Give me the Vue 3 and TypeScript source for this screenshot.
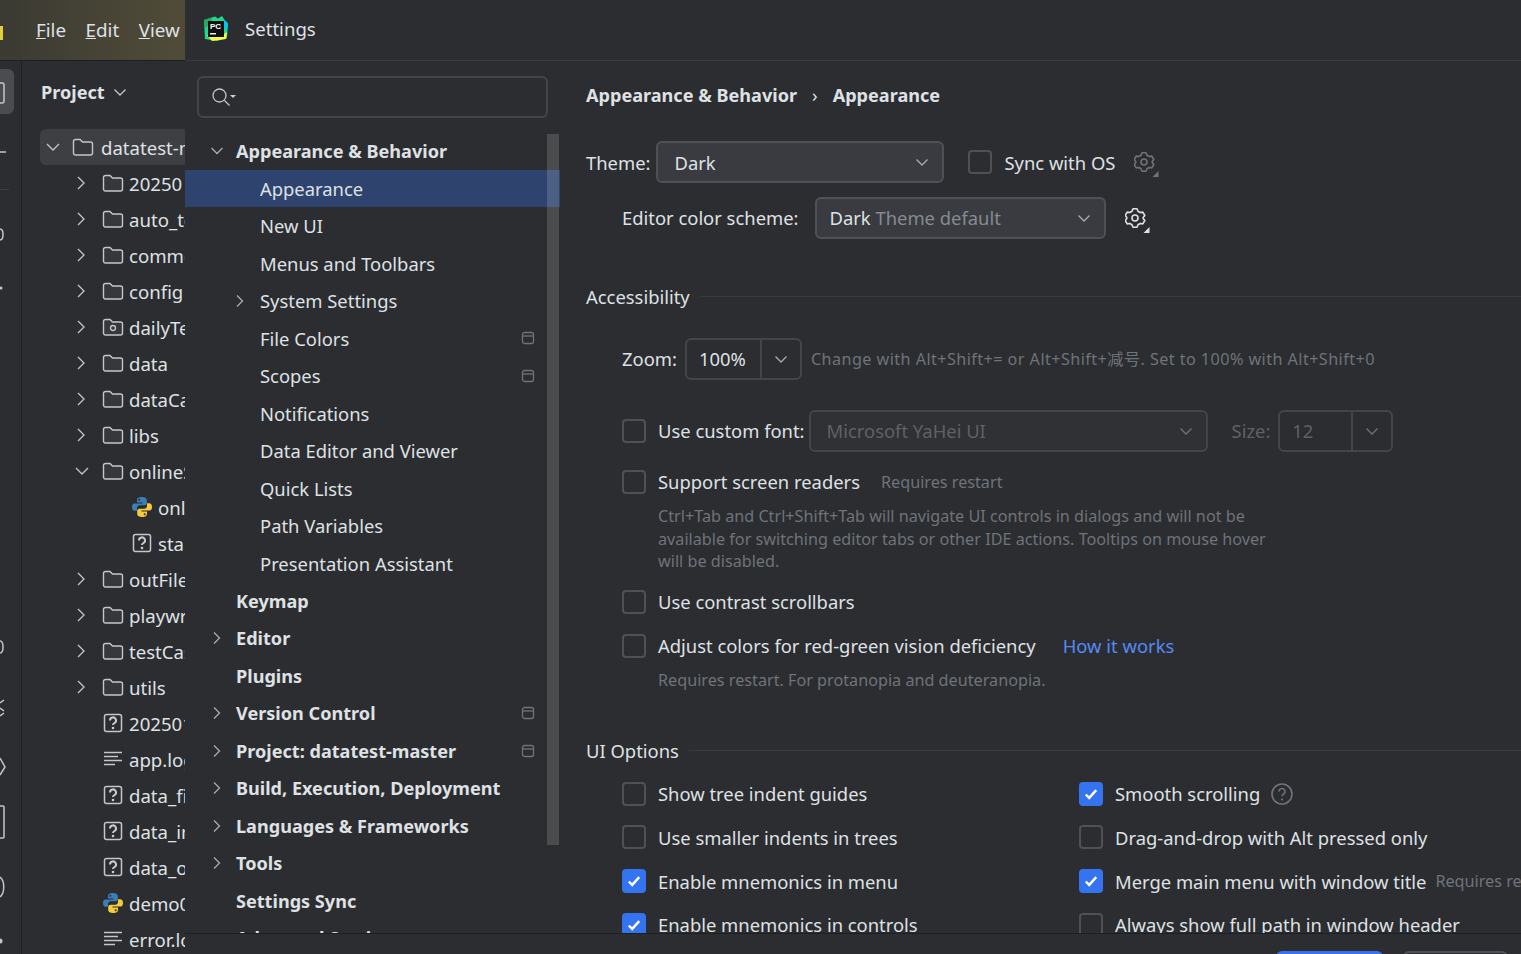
<script setup lang="ts">
interface TreeRow { label: string; indent: number; arrow?: 'r' | 'd'; icon: 'folder' | 'pkg' | 'py' | 'q' | 'log' }
interface NavRow { label: string; indent: number; arrow?: 'r' | 'd'; bold?: boolean; sel?: boolean; box?: boolean }

const tree: TreeRow[] = [
  { label: '20250', indent: 1, arrow: 'r', icon: 'folder' },
  { label: 'auto_test', indent: 1, arrow: 'r', icon: 'folder' },
  { label: 'common', indent: 1, arrow: 'r', icon: 'folder' },
  { label: 'config', indent: 1, arrow: 'r', icon: 'folder' },
  { label: 'dailyTest', indent: 1, arrow: 'r', icon: 'pkg' },
  { label: 'data', indent: 1, arrow: 'r', icon: 'folder' },
  { label: 'dataCase', indent: 1, arrow: 'r', icon: 'folder' },
  { label: 'libs', indent: 1, arrow: 'r', icon: 'folder' },
  { label: 'onlineScript', indent: 1, arrow: 'd', icon: 'folder' },
  { label: 'online', indent: 2, icon: 'py' },
  { label: 'start', indent: 2, icon: 'q' },
  { label: 'outFile', indent: 1, arrow: 'r', icon: 'folder' },
  { label: 'playwright', indent: 1, arrow: 'r', icon: 'folder' },
  { label: 'testCase', indent: 1, arrow: 'r', icon: 'folder' },
  { label: 'utils', indent: 1, arrow: 'r', icon: 'folder' },
  { label: '20250101', indent: 1, icon: 'q' },
  { label: 'app.log', indent: 1, icon: 'log' },
  { label: 'data_file', indent: 1, icon: 'q' },
  { label: 'data_info', indent: 1, icon: 'q' },
  { label: 'data_out', indent: 1, icon: 'q' },
  { label: 'demo01', indent: 1, icon: 'py' },
  { label: 'error.log', indent: 1, icon: 'log' },
]

const nav: NavRow[] = [
  { label: 'Appearance & Behavior', indent: 0, arrow: 'd', bold: true },
  { label: 'Appearance', indent: 1, sel: true },
  { label: 'New UI', indent: 1 },
  { label: 'Menus and Toolbars', indent: 1 },
  { label: 'System Settings', indent: 1, arrow: 'r' },
  { label: 'File Colors', indent: 1, box: true },
  { label: 'Scopes', indent: 1, box: true },
  { label: 'Notifications', indent: 1 },
  { label: 'Data Editor and Viewer', indent: 1 },
  { label: 'Quick Lists', indent: 1 },
  { label: 'Path Variables', indent: 1 },
  { label: 'Presentation Assistant', indent: 1 },
  { label: 'Keymap', indent: 0, bold: true },
  { label: 'Editor', indent: 0, arrow: 'r', bold: true },
  { label: 'Plugins', indent: 0, bold: true },
  { label: 'Version Control', indent: 0, arrow: 'r', bold: true, box: true },
  { label: 'Project: datatest-master', indent: 0, arrow: 'r', bold: true, box: true },
  { label: 'Build, Execution, Deployment', indent: 0, arrow: 'r', bold: true },
  { label: 'Languages & Frameworks', indent: 0, arrow: 'r', bold: true },
  { label: 'Tools', indent: 0, arrow: 'r', bold: true },
  { label: 'Settings Sync', indent: 0, bold: true },
  { label: 'Advanced Settings', indent: 0, bold: true },
]

const uiLeft = [
  { label: 'Show tree indent guides', on: false },
  { label: 'Use smaller indents in trees', on: false },
  { label: 'Enable mnemonics in menu', on: true },
  { label: 'Enable mnemonics in controls', on: true },
]

const gearPath = 'M8 .8h4L13 3.200 15.200 4.500 17.800 4.100 19.800 7.500 18.200 9.400V10.600L19.800 12.500 17.800 15.900 15.200 15.500 13 16.800 12 19.200H8L7 16.800 4.800 15.500 2.200 15.900 .2 12.500 1.800 10.600V9.400L.2 7.500 2.200 4.100 4.800 4.500 7 3.200z'
const folderPath = 'M1.500 4.500a2 2 0 0 1 2-2h4.500l2.500 2.500h8a2 2 0 0 1 2 2v9a2 2 0 0 1-2 2h-15a2 2 0 0 1-2-2z'
</script>

<template>
  <div class="stage">
    <!-- IDE behind -->
    <div class="ide">
      <div class="ide-bar">
        <span class="logo-peek"></span>
        <span class="menu"><u>F</u>ile</span>
        <span class="menu"><u>E</u>dit</span>
        <span class="menu"><u>V</u>iew</span>
      </div>
      <div class="ide-body">
        <div class="rail">
          <div class="rail-active"></div>
          <svg class="rail-art" width="21" height="893" viewBox="0 61 21 893">
            <path class="rail-ln" d="M-3 83H2a2 2 0 0 1 2 2V101a2 2 0 0 1-2 2H-3" />
            <path class="rail-ln" d="M0 152H6" />
            <path class="rail-div" d="M0 189.500H9" />
            <path class="rail-ln" d="M0 229C4 229 4 240 0 240" />
            <circle cx="1" cy="288" r="1.500" fill="#c3c6cc" />
            <path class="rail-ln" d="M0 641C4 641 4 653 0 653" />
            <path class="rail-ln" d="M0 703L4 700M0 708L4 711M0 716L4 713" />
            <path class="rail-ln" d="M0 758L5 767L0 775" />
            <path class="rail-ln" d="M0 806H3a1 1 0 0 1 1 1V837a1 1 0 0 1-1 1H0" />
            <path class="rail-ln" d="M0 877C5 881 5 893 0 897" />
            <circle cx="0" cy="941" r="2.500" fill="#c3c6cc" />
          </svg>
        </div>
        <div class="project">
          <div class="project-head">
            <span>Project</span>
            <svg width="14" height="14" viewBox="0 0 14 14"><path d="M1.500 4.500l5.500 5.500 5.500-5.500" class="ln" /></svg>
          </div>
          <div class="root-row">
            <svg class="tw" width="16" height="16" viewBox="0 0 16 16"><path d="M2 5l6 6 6-6" class="ln" /></svg>
            <svg class="fo" width="22" height="20" viewBox="0 0 22 20"><path :d="folderPath" class="fold" /></svg>
            <span class="tree-text">datatest-master</span>
          </div>
          <div v-for="r in tree" :key="r.label" class="tree-row" :class="'lv' + r.indent">
            <svg v-if="r.arrow === 'r'" class="tw" width="12" height="16" viewBox="0 0 12 16"><path d="M3 2l6 6-6 6" class="ln" /></svg>
            <svg v-else-if="r.arrow === 'd'" class="tw twd" width="14" height="16" viewBox="0 0 14 16"><path d="M1 5l6 6 6-6" class="ln" /></svg>
            <span v-else class="tw-space"></span>
            <svg v-if="r.icon === 'folder' || r.icon === 'pkg'" width="22" height="20" viewBox="0 0 22 20">
              <path :d="folderPath" class="fold" />
              <circle v-if="r.icon === 'pkg'" cx="11" cy="11" r="2.500" class="ln" />
            </svg>
            <svg v-else-if="r.icon === 'py'" width="22" height="22" viewBox="0 0 22 22">
              <path d="M11 1c-4 0-5 1.500-5 3v2.500h5.500v1H3.500C1.500 7.500 1 9.500 1 11s.6 3.800 2.500 3.800H6V12c0-1.500 1.200-2.700 2.700-2.700h4.800c1.300 0 2.300-1 2.300-2.300V4c0-1.800-2-3-4.800-3z" fill="#3b7fb8" />
              <path d="M11 21c4 0 5-1.500 5-3v-2.500h-5.500v-1h8c2 0 2.500-2 2.500-3.500s-.6-3.800-2.500-3.800H16V10c0 1.500-1.200 2.700-2.700 2.700H8.500c-1.300 0-2.300 1-2.300 2.300v3c0 1.800 2 3 4.800 3z" fill="#f5cb3c" />
              <circle cx="8.300" cy="3.800" r="1" fill="#2b2d30" />
              <circle cx="13.700" cy="18.200" r="1" fill="#2b2d30" />
            </svg>
            <svg v-else-if="r.icon === 'q'" width="22" height="20" viewBox="0 0 22 20">
              <rect x="2.500" y="1.500" width="17" height="17" rx="2" class="qbox" />
              <path d="M8 7.500a3 3 0 1 1 4.500 2.500c-1 .6-1.500 1-1.500 2" class="ln-b" />
              <circle cx="11" cy="15" r="1.300" fill="#c9ccd1" />
            </svg>
            <svg v-else width="22" height="20" viewBox="0 0 22 20">
              <path d="M2 3.500h18M2 7.500h14M2 11.500h18M2 15.500h11" class="ln" />
            </svg>
            <span class="tree-text">{{ r.label }}</span>
          </div>
        </div>
      </div>
    </div>

    <!-- Settings dialog -->
    <div class="dialog">
      <div class="title">
        <svg width="28" height="28" viewBox="0 0 28 28">
          <path d="M2 5L13 1.500L16 3.500L20 1L23 5.500L26 9L25 23L15 26L3 24z" fill="#21d789" />
          <path d="M2 5L10 2.500L9 8L3.500 13z" fill="#2aa564" />
          <path d="M5 20L21 20L25 17L24 24L10 26z" fill="#fcf84a" />
          <path d="M21 4L26 8L25 15L21 12z" fill="#07c3f2" />
          <rect x="6" y="6" width="16" height="16" fill="#101012" />
          <text x="8" y="14" class="pc-t">PC</text>
          <rect x="8" y="18" width="6" height="1.500" fill="#eee" />
        </svg>
        <span>Settings</span>
      </div>
      <div class="dialog-main">
        <aside class="side">
          <div class="search">
            <svg width="28" height="22" viewBox="0 0 28 22"><circle cx="8.500" cy="9.500" r="6.500" class="ln" /><path d="M13.500 14.500l5 5" class="ln" /><path d="M19 9h6l-3 3z" fill="#c9ccd1" /></svg>
          </div>
          <div class="nav-wrap">
            <div class="nav-list">
              <div v-for="n in nav" :key="n.label" class="nav-row" :class="{ sel: n.sel, bold: n.bold, sub: n.indent === 1 }">
                <svg v-if="n.arrow === 'r'" class="nav-tw" width="10" height="14" viewBox="0 0 10 14"><path d="M2 1.500l5.500 5.500-5.500 5.500" class="ln2" /></svg>
                <svg v-else-if="n.arrow === 'd'" class="nav-tw dn" width="14" height="10" viewBox="0 0 14 10"><path d="M1.500 2l5.500 5.500 5.500-5.500" class="ln2" /></svg>
                <span class="nav-text">{{ n.label }}</span>
                <svg v-if="n.box" class="box" width="14" height="14" viewBox="0 0 14 14"><rect x="1.500" y="1.500" width="11" height="11" rx="2" class="ln3" /><path d="M1.500 5h11" class="ln3" /></svg>
              </div>
            </div>
            <div class="scroll"><div class="thumb"></div></div>
          </div>
        </aside>
        <main class="content">
          <div class="crumbs"><b>Appearance &amp; Behavior</b><span class="sep">›</span><b>Appearance</b></div>
          <div class="row theme">
            <span>Theme:</span>
            <div class="combo c-theme"><span>Dark</span><svg width="14" height="14" viewBox="0 0 14 14"><path d="M1.500 4.500l5.500 5.500 5.500-5.500" class="ln2" /></svg></div>
            <span class="cb sync"></span><span>Sync with OS</span>
            <svg class="gear g1" width="25" height="25" viewBox="0 0 25 25"><path :d="gearPath" class="gear-dim" /><circle cx="10" cy="10" r="3" class="gear-dim" /><path d="M24.500 19v6h-6z" fill="#6f737a" /></svg>
          </div>
          <div class="row scheme">
            <span class="up">Editor color scheme:</span>
            <div class="combo c-scheme"><span class="up">Dark <i>Theme default</i></span><svg width="14" height="14" viewBox="0 0 14 14"><path d="M1.500 4.500l5.500 5.500 5.500-5.500" class="ln2" /></svg></div>
            <svg class="gear g2" width="25" height="25" viewBox="0 0 25 25"><path :d="gearPath" class="gear-on" /><circle cx="10" cy="10" r="3" class="gear-on" /><path d="M24.500 19v6h-6z" fill="#dfe1e5" /></svg>
          </div>
          <div class="group acc"><span>Accessibility</span><div class="rule"></div></div>
          <div class="row zoom">
            <span class="up">Zoom:</span>
            <div class="split z"><span class="val up">100%</span><span class="arr"><svg width="14" height="14" viewBox="0 0 14 14"><path d="M1.500 4.500l5.500 5.500 5.500-5.500" class="ln2" /></svg></span></div>
            <span class="hint zh up">Change with Alt+Shift+= or Alt+Shift+减号. Set to 100% with Alt+Shift+0</span>
          </div>
          <div class="row font">
            <span class="cb"></span><span class="lbl up">Use custom font:</span>
            <div class="combo c-font"><span class="up">Microsoft YaHei UI</span><svg width="14" height="14" viewBox="0 0 14 14"><path d="M1.500 4.500l5.500 5.500 5.500-5.500" class="ln2" /></svg></div>
            <span class="off-l up">Size:</span>
            <div class="split s"><span class="val up">12</span><span class="arr"><svg width="14" height="14" viewBox="0 0 14 14"><path d="M1.500 4.500l5.500 5.500 5.500-5.500" class="ln2" /></svg></span></div>
          </div>
          <div class="row reader">
            <span class="cb"></span><span class="lbl up">Support screen readers</span><span class="hint rr">Requires restart</span>
          </div>
          <p class="note">Ctrl+Tab and Ctrl+Shift+Tab will navigate UI controls in dialogs and will not be<br />available for switching editor tabs or other IDE actions. Tooltips on mouse hover<br />will be disabled.</p>
          <div class="row contrast"><span class="cb"></span><span class="lbl up">Use contrast scrollbars</span></div>
          <div class="row vision"><span class="cb"></span><span class="lbl up">Adjust colors for red-green vision deficiency</span><span class="link up">How it works</span></div>
          <p class="note n2">Requires restart. For protanopia and deuteranopia.</p>
          <div class="group ui"><span>UI Options</span><div class="rule"></div></div>
          <div class="opts">
            <div class="col">
              <div v-for="o in uiLeft" :key="o.label" class="opt">
                <span class="cb" :class="{ on: o.on }"><svg v-if="o.on" width="16" height="16" viewBox="0 0 16 16"><path d="M2.800 8.500l3.400 3.400 7-7.800" class="chk" /></svg></span>
                <span class="lbl">{{ o.label }}</span>
              </div>
            </div>
            <div class="col">
              <div class="opt">
                <span class="cb on"><svg width="16" height="16" viewBox="0 0 16 16"><path d="M2.800 8.500l3.400 3.400 7-7.800" class="chk" /></svg></span>
                <span class="lbl">Smooth scrolling</span>
                <svg class="help" width="22" height="22" viewBox="0 0 22 22"><circle cx="11" cy="11" r="10" class="ln4" /><path d="M8 8.500a3 3 0 1 1 4.500 2.600c-1 .6-1.500 1.100-1.500 2.200" class="ln4" /><circle cx="11" cy="16.500" r="1.100" fill="#6f737a" /></svg>
              </div>
              <div class="opt"><span class="cb"></span><span class="lbl">Drag-and-drop with Alt pressed only</span></div>
              <div class="opt">
                <span class="cb on"><svg width="16" height="16" viewBox="0 0 16 16"><path d="M2.800 8.500l3.400 3.400 7-7.800" class="chk" /></svg></span>
                <span class="lbl">Merge main menu with window title</span><span class="hint rq">Requires restart</span>
              </div>
              <div class="opt"><span class="cb"></span><span class="lbl">Always show full path in window header</span></div>
            </div>
          </div>
        </main>
      </div>
      <div class="footer">
        <span class="btn primary"></span>
        <span class="btn"></span>
      </div>
    </div>
  </div>
</template>

<style>
html, body { margin: 0; background: #2b2d30; overflow: hidden; }
</style>

<style scoped>
.stage {
  position: relative; width: 1521px; height: 954px; overflow: hidden; background: #2b2d30;
  font-family: "Noto Sans", "Noto Sans CJK SC", sans-serif; font-size: 18.400px; color: #dfe1e5;
}
svg { display: block; flex: none; }
.up { margin-bottom: 2px; }
.ln { fill: none; stroke: #c3c6cc; stroke-width: 1.300; }
.fold { fill: #36383c; stroke: #c3c6cc; stroke-width: 1.400; }
.qbox { fill: none; stroke: #c3c6cc; stroke-width: 1.500; }
.ln-b { fill: none; stroke: #c9ccd1; stroke-width: 2; }
.ln2 { fill: none; stroke: #a9acb2; stroke-width: 1.300; }
.ln3 { fill: none; stroke: #6f737a; stroke-width: 1.300; }
.ln4 { fill: none; stroke: #6f737a; stroke-width: 1.600; }
.gear-dim { fill: none; stroke: #6f737a; stroke-width: 1.600; stroke-linejoin: round; }
.gear-on { fill: none; stroke: #dfe1e5; stroke-width: 1.600; stroke-linejoin: round; }
.chk { fill: none; stroke: #fff; stroke-width: 2.400; }

.ide { width: 185px; height: 954px; overflow: hidden; display: flex; flex-direction: column; }
.ide-bar { height: 61px; flex: none; display: flex; align-items: center; gap: 19.500px; padding-left: 36px; background: linear-gradient(90deg, #3b3a33, #504c38); box-sizing: border-box; border-bottom: 1px solid #1e1f22; position: relative; font-size: 18.800px; }
.logo-peek { position: absolute; left: 0; top: 26px; width: 3px; height: 14px; background: #e4cf3a; }
.ide-body { flex: 1; display: flex; min-height: 0; }
.rail { width: 21px; flex: none; border-right: 1px solid #1e1f22; position: relative; }
.rail-active { position: absolute; left: -8px; top: 8px; width: 22px; height: 45px; background: #4a4c50; border-radius: 6px; }
.rail-art { position: absolute; left: 0; top: 0; }
.rail-ln { fill: none; stroke: #c3c6cc; stroke-width: 1.500; }
.rail-div { fill: none; stroke: #3d3f43; stroke-width: 1; }
.project { flex: 1; min-width: 0; padding: 11px 0 0 18px; overflow: hidden; font-size: 18.600px; }
.project-head { display: flex; align-items: center; gap: 8px; font-weight: 700; height: 40px; padding-left: 1px; font-size: 18.100px; }
.root-row { margin-top: 17px; height: 36px; width: 200px; background: #3d3f43; border-radius: 6px; display: flex; align-items: center; padding-left: 5px; box-sizing: border-box; gap: 11px; white-space: nowrap; }
.tree-row { display: flex; align-items: center; height: 36px; white-space: nowrap; }
.tree-text { margin-left: 5px; }
.root-row .tree-text { margin-left: -4px; }
.tw-space { width: 12px; flex: none; }
.lv1 { padding-left: 35px; }
.lv2 { padding-left: 64px; }
.tree-row .tw { margin-right: 15px; }
.tree-row .twd { margin-right: 13px; }
.tree-row .tw-space { margin-right: 15px; }

.dialog { position: absolute; left: 185px; top: 0; width: 1336px; height: 954px; background: #2b2d30; display: flex; flex-direction: column; }
.title { height: 61px; flex: none; border-bottom: 1px solid #393b40; box-sizing: border-box; display: flex; align-items: center; gap: 15px; padding: 0 0 2px 17px; font-size: 18.600px; }
.title span { margin-bottom: 2px; }
.pc-t { font: 700 8px "Liberation Sans", sans-serif; fill: #fff; }
.dialog-main { flex: 1; display: flex; min-height: 0; }
.side { width: 375px; flex: none; padding-top: 15px; overflow: hidden; }
.search { margin-left: 12px; width: 351px; height: 42px; box-sizing: border-box; border: 2px solid #43454a; border-radius: 6px; display: flex; align-items: center; padding-left: 12px; }
.nav-wrap { display: flex; margin-top: 14px; position: relative; }
.nav-list { width: 375px; }
.nav-row { height: 37.500px; display: flex; align-items: center; padding-left: 51px; position: relative; white-space: nowrap; }
.nav-row.sub { padding-left: 75px; }
.nav-row.bold { font-weight: 700; font-size: 18.100px; }
.nav-row.sel { background: #2e436e; }
.nav-tw { position: absolute; left: 27px; }
.nav-row.sub .nav-tw { left: 50px; }
.nav-tw.dn { left: 25px; }
.box { position: absolute; left: 336px; }
.scroll { position: absolute; left: 362px; top: 2px; width: 12px; height: 711px; }
.thumb { width: 12px; height: 100%; background: rgba(255,255,255,.15); }

.content { flex: 1; min-width: 0; padding: 0 0 0 26px; overflow: hidden; position: relative; }
.crumbs { display: flex; align-items: center; height: 36px; margin-top: 16px; font-weight: 700; white-space: nowrap; font-size: 18.100px; }
.crumbs b { font-weight: 700; }
.sep { margin: 0 15px; font-weight: 400; }
.row { display: flex; align-items: center; white-space: nowrap; }
.theme { margin-top: 28px; height: 42px; gap: 8px; }
.combo { height: 42px; box-sizing: border-box; border: 2px solid #4e5157; background: #393b40; border-radius: 6px; display: flex; align-items: center; justify-content: space-between; padding: 0 13px 0 16px; }
.c-theme { width: 288px; margin-left: -2px; margin-right: 16px; }
.c-scheme { width: 291px; margin-left: 16px; padding-left: 13px; }
.combo i { font-style: normal; color: #868a91; }
.cb { width: 24px; height: 24px; flex: none; box-sizing: border-box; border: 2px solid #4e5157; border-radius: 4px; display: flex; align-items: center; justify-content: center; }
.cb.sync { margin-right: 4px; }
.cb.on { background: #3574f0; border-color: #3574f0; }
.gear { margin-top: 5px; }
.g1 { margin-left: 11px; }
.g2 { margin-left: 19px; }
.scheme { margin-top: 13px; padding-left: 36px; height: 44px; }
.group { display: flex; align-items: center; white-space: nowrap; gap: 10px; height: 30px; }
.rule { flex: 1; height: 1px; background: #393b40; }
.acc { margin-top: 41px; }
.zoom { margin-top: 27px; padding-left: 36px; height: 42px; gap: 8px; }
.split { display: flex; height: 42px; box-sizing: border-box; border: 2px solid #43454a; border-radius: 6px; align-items: center; }
.split .val { flex: 1; padding-left: 12px; }
.split .arr { width: 40px; height: 100%; border-left: 2px solid #43454a; display: flex; align-items: center; justify-content: center; box-sizing: border-box; }
.z { width: 117px; }
.hint { color: #6f737a; font-size: 16.200px; }
.zh { margin-left: 1px; letter-spacing: .43px; }
.font { margin-top: 30px; padding-left: 36px; height: 42px; }
.lbl { margin-left: 12px; }
.c-font { width: 399px; margin-left: 4px; background: #2f3134; border-color: #43454a; color: #5e6167; }
.c-font svg path, .s svg path { stroke: #6f737a; }
.off-l { margin-left: 24px; color: #5e6167; }
.s { width: 115px; margin-left: 8px; color: #5e6167; }
.reader { margin-top: 9px; padding-left: 36px; height: 42px; }
.rr { margin-left: 21px; }
.note { margin: 0; padding-left: 72px; color: #6f737a; font-size: 16.200px; line-height: 22.500px; white-space: nowrap; }
.reader + .note { margin-top: 2px; }
.contrast { margin-top: 8.500px; padding-left: 36px; height: 42px; }
.vision { margin-top: 2px; padding-left: 36px; height: 42px; }
.link { color: #548af7; margin-left: 27px; }
.n2 { margin-top: 2px; }
.ui { margin-top: 43.500px; }
.opts { display: flex; margin-top: 7px; padding-left: 36px; }
.col { width: 457px; flex: none; }
.opt { display: flex; align-items: center; height: 43.670px; white-space: nowrap; }
.help { margin-left: 11px; }
.rq { margin-left: 9px; }

.footer { position: absolute; left: 0; right: 0; top: 933px; height: 21px; background: #2b2d30; border-top: 1px solid #1e1f22; box-sizing: border-box; }
.btn { position: absolute; top: 17px; width: 107px; height: 30px; border: 2px solid #4e5157; border-radius: 6px; box-sizing: border-box; }
.btn.primary { left: 1091px; background: #3574f0; border-color: #3574f0; }
.btn:not(.primary) { left: 1218px; width: 105px; }
</style>
